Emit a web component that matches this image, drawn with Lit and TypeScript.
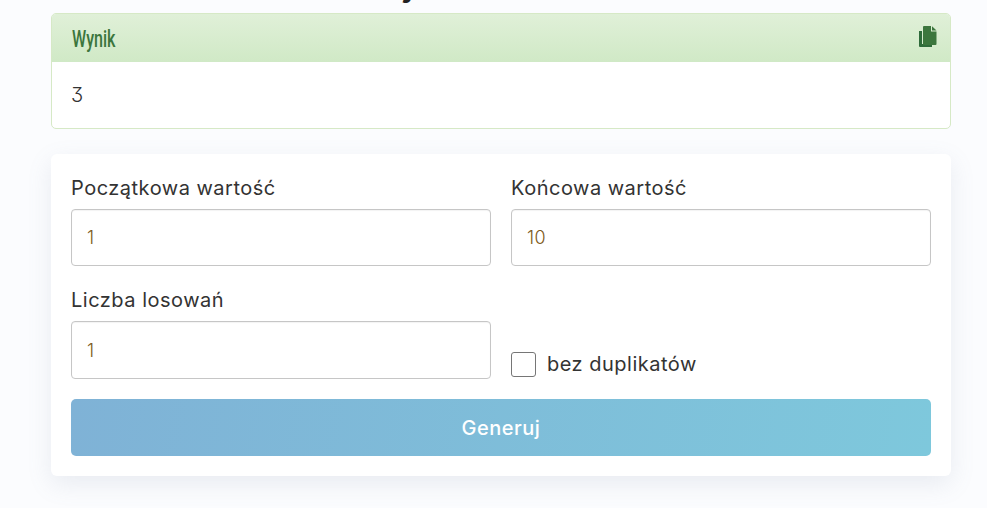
import { LitElement, html, css } from "lit";
import { customElement } from "lit/decorators.js";

@customElement("app-root")
export class AppRoot extends LitElement {
  static styles = css`
    :host {
      display: block;
      width: 987px;
      height: 508px;
      overflow: hidden;
      background: #fbfcfe;
      font-family: "Inter", "Liberation Sans", sans-serif;
      color: #333;
    }
    .page {
      padding: 0 36px 0 51px;
      display: flex;
      flex-direction: column;
      gap: 25px;
    }
    .title {
      height: 13px;
      margin: 0 0 -25px;
      overflow: hidden;
      position: relative;
    }
    .title span {
      position: absolute;
      left: 350px;
      top: -25px;
      font: 700 28px "Inter", sans-serif;
      line-height: 24px;
      color: #222;
    }
    .result {
      border: 1px solid #d6e9c6;
      border-radius: 5px;
      background: #fff;
      overflow: hidden;
      height: 116px;
      box-sizing: border-box;
    }
    .result-head {
      height: 48px;
      box-sizing: border-box;
      background: linear-gradient(#e0f0d8, #d0e9c6);
      display: flex;
      align-items: center;
      justify-content: space-between;
      padding: 0 13px 2px 20px;
      color: #3c763d;
    }
    .result-title {
      font: 500 23px/1 "Roboto", sans-serif;
      display: inline-block;
      padding-top: 4px;
      transform: scaleX(0.7);
      transform-origin: left center;
    }
    .result-body {
      padding: 21px 19px;
      font-size: 20px;
      line-height: 24px;
      font-weight: 300;
      font-feature-settings: "cv09";
      color: #333;
    }
    .card {
      background: #fff;
      border-radius: 6px;
      box-shadow: 0 8px 24px rgba(120, 135, 160, 0.14);
      padding: 20px;
      height: 322px;
      box-sizing: border-box;
      display: flex;
      flex-direction: column;
    }
    .row {
      display: grid;
      grid-template-columns: 420px 420px;
      gap: 20px;
    }
    .field {
      display: flex;
      flex-direction: column;
      gap: 7px;
    }
    label {
      font: 400 20px/28px "Inter", sans-serif;
      letter-spacing: 0.5px;
      color: #333;
    }
    .field input {
      height: 57px;
      box-sizing: border-box;
      border: 1px solid #c6c6c6;
      border-radius: 4px;
      padding: 0 15px;
      font: 300 18px "Inter", sans-serif;
      letter-spacing: 0.5px;
      color: #7d5a20;
      background: #fff;
      outline: none;
      width: 100%;
      box-shadow: inset 0 1px 1px rgba(0, 0, 0, 0.05);
    }
    .second {
      margin-top: 20px;
    }
    .second input {
      height: 58px;
    }
    .check {
      align-self: end;
      display: flex;
      align-items: center;
      gap: 11px;
      margin-bottom: 1px;
    }
    .box {
      width: 25px;
      height: 25px;
      box-sizing: border-box;
      border: 1px solid #767676;
      border-radius: 3px;
      background: #fff;
    }
    button {
      margin-top: 20px;
      height: 57px;
      border: 0;
      border-radius: 5px;
      background: linear-gradient(100deg, #7fb2d6, #7ec8dc);
      color: #fff;
      font: 500 20px "Inter", sans-serif;
      letter-spacing: 0.5px;
    }
  `;

  render() {
    return html`
      <div class="page">
        <div class="title"><span>y</span></div>
        <section class="result">
          <div class="result-head">
            <span class="result-title">Wynik</span>
            <svg width="19" height="22" viewBox="0 0 19 22" aria-hidden="true">
              <path fill="#2f6b3a" d="M1 5h3v13h10v3H2a1 1 0 0 1-1-1z" />
              <path fill="#3c763d" d="M6 0h7v5.5h5.5V18a1 1 0 0 1-1 1H6a1 1 0 0 1-1-1V1a1 1 0 0 1 1-1z" />
              <path fill="#3c763d" d="M14 0.3l4.5 4.2H14z" />
            </svg>
          </div>
          <div class="result-body">3</div>
        </section>
        <section class="card">
          <div class="row">
            <div class="field">
              <label>Początkowa wartość</label>
              <input value="1" />
            </div>
            <div class="field">
              <label>Końcowa wartość</label>
              <input value="10" />
            </div>
          </div>
          <div class="row second">
            <div class="field">
              <label>Liczba losowań</label>
              <input value="1" />
            </div>
            <div class="check">
              <span class="box"></span>
              <label>bez duplikatów</label>
            </div>
          </div>
          <button>Generuj</button>
        </section>
      </div>
    `;
  }
}
